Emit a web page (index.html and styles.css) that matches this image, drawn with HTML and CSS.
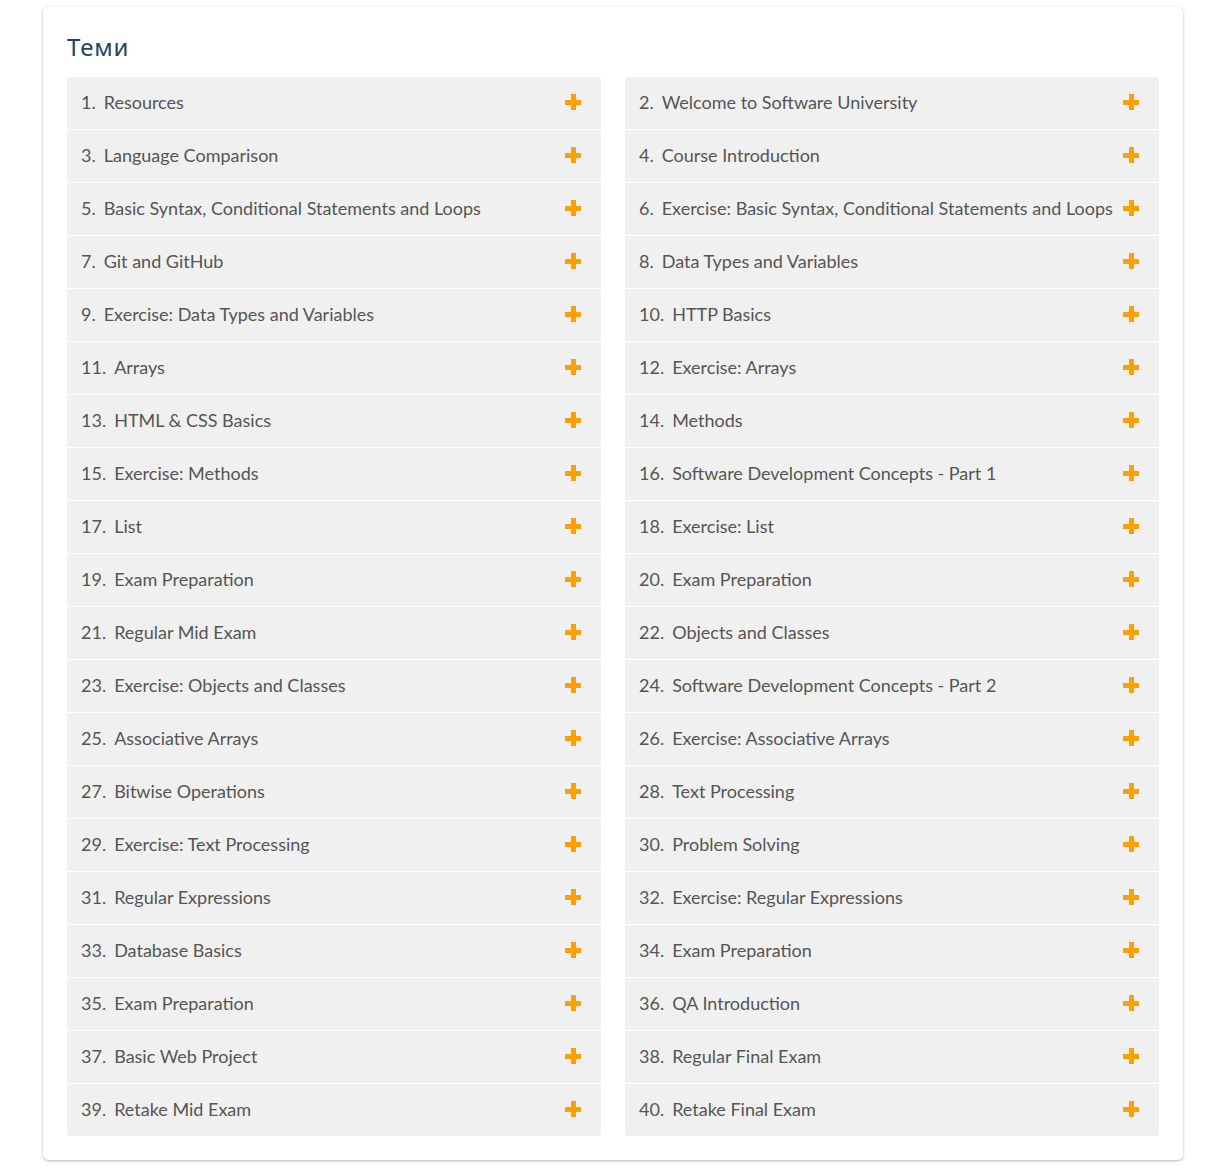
FILE: index.html
```html
<!DOCTYPE html>
<html>
<head>
<meta charset="utf-8">
<link rel="stylesheet" href="styles.css">
</head>
<body>
<section class="card">
  <h2 class="title">Теми</h2>
  <div class="grid">
    <div class="col">
      <div class="row"><span class="num">1.</span><span class="name">Resources</span><span class="plus"></span></div>
      <div class="row"><span class="num">3.</span><span class="name">Language Comparison</span><span class="plus"></span></div>
      <div class="row"><span class="num">5.</span><span class="name">Basic Syntax, Conditional Statements and Loops</span><span class="plus"></span></div>
      <div class="row"><span class="num">7.</span><span class="name">Git and GitHub</span><span class="plus"></span></div>
      <div class="row"><span class="num">9.</span><span class="name">Exercise: Data Types and Variables</span><span class="plus"></span></div>
      <div class="row"><span class="num">11.</span><span class="name">Arrays</span><span class="plus"></span></div>
      <div class="row"><span class="num">13.</span><span class="name">HTML &amp; CSS Basics</span><span class="plus"></span></div>
      <div class="row"><span class="num">15.</span><span class="name">Exercise: Methods</span><span class="plus"></span></div>
      <div class="row"><span class="num">17.</span><span class="name">List</span><span class="plus"></span></div>
      <div class="row"><span class="num">19.</span><span class="name">Exam Preparation</span><span class="plus"></span></div>
      <div class="row"><span class="num">21.</span><span class="name">Regular Mid Exam</span><span class="plus"></span></div>
      <div class="row"><span class="num">23.</span><span class="name">Exercise: Objects and Classes</span><span class="plus"></span></div>
      <div class="row"><span class="num">25.</span><span class="name">Associative Arrays</span><span class="plus"></span></div>
      <div class="row"><span class="num">27.</span><span class="name">Bitwise Operations</span><span class="plus"></span></div>
      <div class="row"><span class="num">29.</span><span class="name">Exercise: Text Processing</span><span class="plus"></span></div>
      <div class="row"><span class="num">31.</span><span class="name">Regular Expressions</span><span class="plus"></span></div>
      <div class="row"><span class="num">33.</span><span class="name">Database Basics</span><span class="plus"></span></div>
      <div class="row"><span class="num">35.</span><span class="name">Exam Preparation</span><span class="plus"></span></div>
      <div class="row"><span class="num">37.</span><span class="name">Basic Web Project</span><span class="plus"></span></div>
      <div class="row"><span class="num">39.</span><span class="name">Retake Mid Exam</span><span class="plus"></span></div>
    </div>
    <div class="col">
      <div class="row"><span class="num">2.</span><span class="name">Welcome to Software University</span><span class="plus"></span></div>
      <div class="row"><span class="num">4.</span><span class="name">Course Introduction</span><span class="plus"></span></div>
      <div class="row"><span class="num">6.</span><span class="name">Exercise: Basic Syntax, Conditional Statements and Loops</span><span class="plus"></span></div>
      <div class="row"><span class="num">8.</span><span class="name">Data Types and Variables</span><span class="plus"></span></div>
      <div class="row"><span class="num">10.</span><span class="name">HTTP Basics</span><span class="plus"></span></div>
      <div class="row"><span class="num">12.</span><span class="name">Exercise: Arrays</span><span class="plus"></span></div>
      <div class="row"><span class="num">14.</span><span class="name">Methods</span><span class="plus"></span></div>
      <div class="row"><span class="num">16.</span><span class="name">Software Development Concepts - Part 1</span><span class="plus"></span></div>
      <div class="row"><span class="num">18.</span><span class="name">Exercise: List</span><span class="plus"></span></div>
      <div class="row"><span class="num">20.</span><span class="name">Exam Preparation</span><span class="plus"></span></div>
      <div class="row"><span class="num">22.</span><span class="name">Objects and Classes</span><span class="plus"></span></div>
      <div class="row"><span class="num">24.</span><span class="name">Software Development Concepts - Part 2</span><span class="plus"></span></div>
      <div class="row"><span class="num">26.</span><span class="name">Exercise: Associative Arrays</span><span class="plus"></span></div>
      <div class="row"><span class="num">28.</span><span class="name">Text Processing</span><span class="plus"></span></div>
      <div class="row"><span class="num">30.</span><span class="name">Problem Solving</span><span class="plus"></span></div>
      <div class="row"><span class="num">32.</span><span class="name">Exercise: Regular Expressions</span><span class="plus"></span></div>
      <div class="row"><span class="num">34.</span><span class="name">Exam Preparation</span><span class="plus"></span></div>
      <div class="row"><span class="num">36.</span><span class="name">QA Introduction</span><span class="plus"></span></div>
      <div class="row"><span class="num">38.</span><span class="name">Regular Final Exam</span><span class="plus"></span></div>
      <div class="row"><span class="num">40.</span><span class="name">Retake Final Exam</span><span class="plus"></span></div>
    </div>
  </div>
</section>
</body>
</html>
```
FILE: styles.css
```css
html, body {
  margin: 0;
  padding: 0;
  background: #ffffff;
}
body {
  padding: 7px 31px 12px 43px;
  font-family: "Lato", "Open Sans", sans-serif;
}
.card {
  background: #fff;
  border-radius: 5px;
  box-shadow: 0 1px 3px rgba(0,0,0,0.28), 0 0 1px rgba(0,0,0,0.08);
  padding: 26px 24px 24px 24px;
}
.title {
  margin: 0 0 16px 0;
  font-family: "Noto Sans", "Open Sans", sans-serif;
  font-weight: 400;
  font-size: 24px;
  line-height: 28px;
  color: #234465;
  letter-spacing: 0.8px;
}
.grid {
  display: grid;
  grid-template-columns: 1fr 1fr;
  column-gap: 24px;
}
.col {
  display: flex;
  flex-direction: column;
  gap: 1px;
  border-radius: 4px;
  overflow: hidden;
}
.row {
  height: 52px;
  box-sizing: border-box;
  background: #f0f0f0;
  display: flex;
  align-items: center;
  padding: 0 20px 2px 14px;
  color: #555555;
  font-size: 18px;
  white-space: nowrap;
}
.num {
  margin-right: 8px;
}
.name {
  flex: 1;
}
.plus {
  position: relative;
  width: 16px;
  height: 16px;
  flex: none;
}
.plus::before, .plus::after {
  content: "";
  position: absolute;
  background: #ffa000;
}
.plus::before {
  left: 0;
  top: 5.5px;
  width: 16px;
  height: 5px;
}
.plus::after {
  left: 5.5px;
  top: 0;
  width: 5px;
  height: 16px;
}
```
